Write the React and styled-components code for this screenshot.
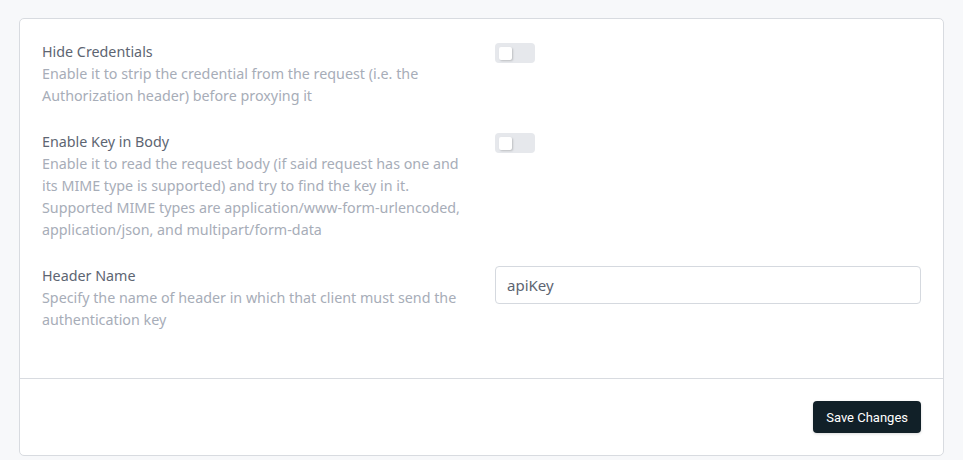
import styled, { createGlobalStyle } from "styled-components";

const GlobalStyle = createGlobalStyle`
  html, body {
    margin: 0;
    padding: 0;
    background: #f7f8fa;
  }
  body {
    font-family: "Noto Sans", "Open Sans", sans-serif;
  }
`;

const Page = styled.div`
  padding: 18px 19px 4px 19px;
`;

const Card = styled.div`
  background: #ffffff;
  border: 1px solid #d8dbe0;
  border-radius: 5px;
`;

const Body = styled.div`
  padding: 22px 22px 47px 22px;
  display: flex;
  flex-direction: column;
  gap: 24px;
`;

const Row = styled.div`
  display: grid;
  grid-template-columns: 428px 1fr;
  column-gap: 25px;
  align-items: start;
`;

const Info = styled.div`
  display: flex;
  flex-direction: column;
`;

const Title = styled.div`
  font-size: 14.3px;
  line-height: 22px;
  color: #5d6572;
`;

const Desc = styled.div`
  font-size: 14.3px;
  line-height: 22px;
  color: #a7adb8;
`;

const Toggle = styled.button`
  width: 40px;
  height: 20px;
  margin-top: 2px;
  padding: 3px 4px;
  border: none;
  border-radius: 4px;
  background: #e6e8ec;
  display: flex;
  align-items: center;
  justify-content: ${(p) => (p.$on ? "flex-end" : "flex-start")};
  cursor: pointer;

  span {
    width: 13px;
    height: 13px;
    background: #ffffff;
    border-radius: 2px;
    box-shadow: 1px 1px 2px rgba(0, 0, 0, 0.18);
  }
`;

const Input = styled.input`
  box-sizing: border-box;
  width: 100%;
  height: 38px;
  margin-top: 1px;
  padding: 0 11px;
  border: 1px solid #d5d9df;
  border-radius: 4px;
  font-family: inherit;
  font-size: 15px;
  color: #5d6572;
  outline: none;
`;

const Footer = styled.div`
  border-top: 1px solid #d8dbe0;
  padding: 22px;
  display: flex;
  justify-content: flex-end;
`;

const SaveButton = styled.button`
  height: 32px;
  padding: 0 13px;
  border: none;
  border-radius: 4px;
  background: #112028;
  color: #ffffff;
  font-family: Roboto, sans-serif;
  font-size: 13px;
  box-shadow: 0 1px 3px rgba(0, 0, 0, 0.15);
  cursor: pointer;
`;

const settings = [
  {
    title: "Hide Credentials",
    desc: "Enable it to strip the credential from the request (i.e. the Authorization header) before proxying it",
    type: "toggle",
  },
  {
    title: "Enable Key in Body",
    desc: "Enable it to read the request body (if said request has one and its MIME type is supported) and try to find the key in it. Supported MIME types are application/www-form-urlencoded, application/json, and multipart/form-data",
    type: "toggle",
  },
  {
    title: "Header Name",
    desc: "Specify the name of header in which that client must send the authentication key",
    type: "input",
    value: "apiKey",
  },
];

const App = () => {
  return (
    <Page>
      <GlobalStyle />
      <Card>
        <Body>
          {settings.map((s) => (
            <Row key={s.title}>
              <Info>
                <Title>{s.title}</Title>
                <Desc>{s.desc}</Desc>
              </Info>
              <div>
                {s.type === "toggle" ? (
                  <Toggle>
                    <span />
                  </Toggle>
                ) : (
                  <Input defaultValue={s.value} />
                )}
              </div>
            </Row>
          ))}
        </Body>
        <Footer>
          <SaveButton>Save Changes</SaveButton>
        </Footer>
      </Card>
    </Page>
  );
};

export default App;
